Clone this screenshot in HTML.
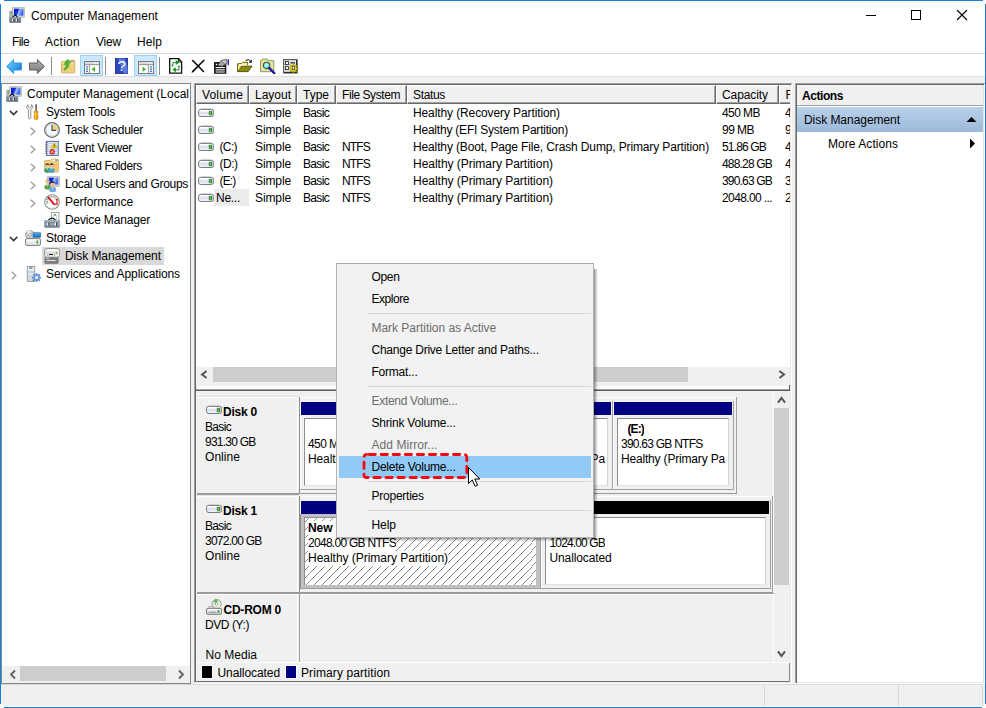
<!DOCTYPE html>
<html><head><meta charset="utf-8"><title>Computer Management</title>
<style>
html,body{margin:0;padding:0;background:#fff;}
body{width:986px;height:708px;overflow:hidden;position:relative;font-family:"Liberation Sans",sans-serif;font-size:12px;color:#000;}
#win{position:absolute;left:0;top:0;width:986px;height:708px;overflow:hidden;background:#fff;}
#win div,#win span,#win svg{position:absolute;}
.t{white-space:nowrap;line-height:16px;height:16px;}

</style></head>
<body>
<div id="win">
<div style="left:0px;top:0px;width:986px;height:708px;background:#fff;"></div>
<div style="left:1px;top:77px;width:984px;height:630px;background:#f0f0f0;"></div>
<div style="left:1px;top:76px;width:984px;height:1px;background:#dfdfdf;"></div>
<div style="left:1px;top:53px;width:984px;height:1px;background:#d4d4d4;"></div>
<div style="left:4px;top:0px;width:979px;height:1px;background:#1880d8;"></div>
<div style="left:0px;top:4px;width:1px;height:700px;background:#1880d8;"></div>
<div style="left:985px;top:4px;width:1px;height:700px;background:#1880d8;"></div>
<div style="left:4px;top:707px;width:978px;height:1px;background:#1880d8;"></div>
<div style="left:0px;top:704px;width:1px;height:4px;background:#fff;"></div>
<div style="left:1px;top:706px;width:984px;height:1px;background:#fbfbfb;"></div>
<div style="left:1px;top:684px;width:984px;height:1px;background:#d9d9d9;"></div>
<span class="t" style="left:31px;top:8px;letter-spacing:0.049px;">Computer Management</span>
<svg style="left:860px;top:5px" width="120" height="22" viewBox="0 0 120 22"><path d="M6 10.5H16" stroke="#000" stroke-width="1" fill="none"/><rect x="51.5" y="5.5" width="9" height="9" stroke="#000" stroke-width="1" fill="none"/><path d="M97 5L107 15M107 5L97 15" stroke="#000" stroke-width="1.1" fill="none"/></svg>
<span class="t" style="left:12px;top:34px;letter-spacing:-0.586px;">File</span>
<span class="t" style="left:45px;top:34px;letter-spacing:0.273px;">Action</span>
<span class="t" style="left:96px;top:34px;letter-spacing:-0.199px;">View</span>
<span class="t" style="left:137px;top:34px;letter-spacing:0.078px;">Help</span>
<div style="left:1px;top:83px;width:190px;height:601px;background:#fff;border:1px solid #828790;box-sizing:border-box;"></div>
<div style="left:2px;top:666px;width:188px;height:17px;background:#f0f0f0;"></div>
<div style="left:20px;top:666px;width:146px;height:15px;background:#cdcdcd;"></div>
<svg style="left:3px;top:666px" width="186" height="16"><path d="M12 4.5L8 8.5L12 12.5" stroke="#606060" stroke-width="1.8" fill="none"/><path d="M176 4.5L180 8.5L176 12.5" stroke="#606060" stroke-width="1.8" fill="none"/></svg>
<span class="t" style="left:27px;top:86px;letter-spacing:-0.004px;max-width:163px;overflow:hidden;">Computer Management (Local</span>
<svg style="left:6px;top:86px" width="16" height="16" viewBox="0 0 16 16"><defs><linearGradient id="g1" x1="0" y1="0" x2="1" y2="0.3"><stop offset="0" stop-color="#0818c8"/><stop offset=".45" stop-color="#1030e0"/><stop offset=".6" stop-color="#a8c0ff"/><stop offset="1" stop-color="#3860f0"/></linearGradient></defs><rect x="0.8" y="4" width="2.6" height="6.5" fill="#b8b8b8" stroke="#909090" stroke-width=".5"/><rect x="1.5" y="7.2" width="1.4" height="1.1" fill="#30e030"/><rect x="1.9" y="5" width=".6" height="1.4" fill="#404040"/><rect x="3.5" y="0.3" width="12.2" height="9.9" rx=".6" fill="#dcdcd8" stroke="#a8a8a8" stroke-width=".7"/><rect x="5" y="1.7" width="9.4" height="7" fill="url(#g1)"/><path d="M3.5 10.8Q6.1 5.8 8.7 10.8" stroke="#101010" stroke-width="1.3" fill="#f4f4f4"/><rect x="0.3" y="10.3" width="11.8" height="5.4" rx=".5" fill="#5f6f7d"/><rect x="0.3" y="10.3" width="11.8" height="1.6" fill="#93a1ae"/><rect x="0.3" y="12.6" width="11.8" height="1.3" fill="#8795a2"/><rect x="3.2" y="12.2" width="1.2" height="2.2" fill="#fff"/><rect x="4.4" y="12.2" width=".9" height="2.2" fill="#222"/><rect x="6.9" y="12.2" width="1.2" height="2.2" fill="#fff"/><rect x="8.1" y="12.2" width=".9" height="2.2" fill="#222"/></svg>
<span class="t" style="left:46px;top:104px;letter-spacing:-0.178px;">System Tools</span>
<svg style="left:25px;top:104px" width="16" height="16" viewBox="0 0 16 16"><path d="M3.2 0.6C1.6 1.3 1.2 3 2 4.4L3.4 5.6V14.2Q4.6 15.6 5.8 14.2V5.6L7.4 4.2C8 3 7.8 1.4 6.6 0.5L6.4 3L4.8 3.9L3.3 3Z" fill="#f2f2f2" stroke="#808080" stroke-width=".8" stroke-linejoin="round"/><rect x="10.5" y="0.2" width="1.2" height="7.4" fill="#303030"/><path d="M9.2 7.2H13V9.6L12.2 10.4L13 11.2V15Q11.1 16.2 9.2 15V11.2L10 10.4L9.2 9.6Z" fill="#f0a010" stroke="#c07800" stroke-width=".5"/><rect x="10" y="7.8" width="1" height="7" fill="#ffd060" opacity=".8"/></svg>
<svg style="left:9px;top:104px" width="10" height="16"><path d="M0.9 6.8L4.6 10.5L8.3 6.8" stroke="#3c3c3c" stroke-width="1.7" fill="none"/></svg>
<span class="t" style="left:65px;top:122px;letter-spacing:-0.289px;">Task Scheduler</span>
<svg style="left:44px;top:122px" width="16" height="16" viewBox="0 0 16 16"><circle cx="8" cy="8" r="7.3" fill="#e4e8ec" stroke="#6a6a6a" stroke-width="1.3"/><circle cx="8" cy="8" r="6.1" fill="#f4f8fc" stroke="#c4ccd4" stroke-width=".8"/><path d="M8 8V2.2A5.8 5.8 0 0 1 13.8 8Z" fill="#f6cf72"/><path d="M8 3V8.4H12.2" stroke="#304878" stroke-width="1.1" fill="none"/></svg>
<svg style="left:28px;top:122px" width="10" height="16"><path d="M2.8 5.7L6.7 9.5L2.8 13.3" stroke="#a6a6a6" stroke-width="1.6" fill="none"/></svg>
<span class="t" style="left:65px;top:140px;letter-spacing:-0.290px;">Event Viewer</span>
<svg style="left:44px;top:140px" width="16" height="16" viewBox="0 0 16 16"><rect x="2.6" y="1.4" width="11.6" height="14" fill="#e8eefa" stroke="#4a68a8" stroke-width="1"/><g stroke="#a8bce0" stroke-width=".6"><path d="M4 3.5H13.5M4 5.5H13.5M4 7.5H13.5M4 9.5H13.5M4 11.5H13.5M4 13.5H13.5"/></g><g stroke="#707070" stroke-width=".9"><path d="M1.2 2.6H3.6M1.2 4.4H3.6M1.2 6.2H3.6M1.2 8H3.6M1.2 9.8H3.6M1.2 11.6H3.6M1.2 13.4H3.6"/></g><path d="M10.2 2.6L13.3 8H7.1Z" fill="#f8d800" stroke="#c8a000" stroke-width=".5"/><rect x="9.8" y="4.4" width=".9" height="2" fill="#202020"/><rect x="9.8" y="6.8" width=".9" height=".7" fill="#202020"/><circle cx="8.3" cy="11.8" r="2.5" fill="#e02020" stroke="#a01010" stroke-width=".4"/><path d="M7.2 10.7L9.4 12.9M9.4 10.7L7.2 12.9" stroke="#fff" stroke-width=".9"/></svg>
<svg style="left:28px;top:140px" width="10" height="16"><path d="M2.8 5.7L6.7 9.5L2.8 13.3" stroke="#a6a6a6" stroke-width="1.6" fill="none"/></svg>
<span class="t" style="left:65px;top:158px;letter-spacing:-0.360px;">Shared Folders</span>
<svg style="left:44px;top:158px" width="16" height="16" viewBox="0 0 16 16"><path d="M0.6 3.8Q0.6 2.4 2 2.4H6.6L8 1H13.4Q14.4 1 14.4 2V13.4Q14.4 14 13.6 14H0.6Z" fill="#f3d487" stroke="#d2a24a" stroke-width=".8"/><rect x="8.6" y="1.6" width="4.4" height="1.2" fill="#fff"/><rect x="11.2" y="1.6" width="1.8" height="1.2" fill="#3a78d0"/><rect x="9.5" y="4" width="4.6" height="9.6" fill="#eec874"/><ellipse cx="3.4" cy="12.54" rx="3.04" ry="2.4699999999999998" fill="#3aa07a"/><circle cx="3.4" cy="7.6" r="1.9949999999999999" fill="#f0c090"/><path d="M1.31 7.409999999999999A2.09 2.09 0 0 1 5.49 7.409999999999999L4.54 6.6499999999999995L2.26 6.6499999999999995Z" fill="#403028"/><path d="M2.735 10.355L3.4 11.969999999999999L4.0649999999999995 10.355Z" fill="#fff"/><ellipse cx="7.6" cy="12.54" rx="3.04" ry="2.4699999999999998" fill="#48a0c8"/><circle cx="7.6" cy="7.6" r="1.9949999999999999" fill="#f0c090"/><path d="M5.51 7.409999999999999A2.09 2.09 0 0 1 9.69 7.409999999999999L8.74 6.6499999999999995L6.46 6.6499999999999995Z" fill="#302820"/><path d="M6.935 10.355L7.6 11.969999999999999L8.264999999999999 10.355Z" fill="#fff"/></svg>
<svg style="left:28px;top:158px" width="10" height="16"><path d="M2.8 5.7L6.7 9.5L2.8 13.3" stroke="#a6a6a6" stroke-width="1.6" fill="none"/></svg>
<span class="t" style="left:65px;top:176px;letter-spacing:-0.291px;">Local Users and Groups</span>
<svg style="left:44px;top:176px" width="16" height="16" viewBox="0 0 16 16"><defs><linearGradient id="g2" x1="0" y1="0" x2="1" y2="0.3"><stop offset="0" stop-color="#0818c8"/><stop offset=".45" stop-color="#1030e0"/><stop offset=".6" stop-color="#a8c0ff"/><stop offset="1" stop-color="#3860f0"/></linearGradient></defs><rect x="3.4" y="0.4" width="12.2" height="10" rx=".5" fill="#dcdcd8" stroke="#a8a8a8" stroke-width=".7"/><rect x="4.8" y="1.6" width="9.4" height="7" fill="url(#g2)"/><ellipse cx="3.6" cy="11.0" rx="3.2" ry="2.6" fill="#58a838"/><circle cx="3.6" cy="5.8" r="2.1" fill="#f0c090"/><path d="M1.4 5.6A2.2 2.2 0 0 1 5.800000000000001 5.6L4.8 4.8L2.4000000000000004 4.8Z" fill="#c8a860"/><path d="M2.9000000000000004 8.7L3.6 10.399999999999999L4.3 8.7Z" fill="#fff"/><ellipse cx="8.6" cy="13.72" rx="3.5200000000000005" ry="2.8600000000000003" fill="#78a8e0"/><circle cx="8.6" cy="8.0" r="2.3100000000000005" fill="#f0c090"/><path d="M6.18 7.78A2.4200000000000004 2.4200000000000004 0 0 1 11.02 7.78L9.92 6.9L7.279999999999999 6.9Z" fill="#403020"/><path d="M7.83 11.19L8.6 13.059999999999999L9.37 11.19Z" fill="#fff"/></svg>
<svg style="left:28px;top:176px" width="10" height="16"><path d="M2.8 5.7L6.7 9.5L2.8 13.3" stroke="#a6a6a6" stroke-width="1.6" fill="none"/></svg>
<span class="t" style="left:65px;top:194px;letter-spacing:-0.064px;">Performance</span>
<svg style="left:44px;top:194px" width="16" height="16" viewBox="0 0 16 16"><circle cx="8" cy="8" r="7.3" fill="#fff" stroke="#8c8c8c" stroke-width="1.1"/><circle cx="8" cy="8" r="6.2" fill="none" stroke="#d8d8d8" stroke-width=".6"/><path d="M3.6 9.5A4.8 4.8 0 0 1 11.8 4.6" stroke="#3a8050" stroke-width="1.4" fill="none" stroke-dasharray="0.8 0.9"/><path d="M11.6 5.4H13V10.2H10.8" stroke="#e01818" stroke-width="1.2" fill="none"/><path d="M4.3 3.4L10.2 10.3" stroke="#e01818" stroke-width="1.9" stroke-linecap="round"/></svg>
<svg style="left:28px;top:194px" width="10" height="16"><path d="M2.8 5.7L6.7 9.5L2.8 13.3" stroke="#a6a6a6" stroke-width="1.6" fill="none"/></svg>
<span class="t" style="left:65px;top:212px;letter-spacing:-0.170px;">Device Manager</span>
<svg style="left:44px;top:212px" width="16" height="16" viewBox="0 0 16 16"><rect x="7.3" y="0.4" width="7.6" height="8.4" fill="#fff" stroke="#909090" stroke-width=".8"/><rect x="9.6" y="3.2" width="3" height="5.4" fill="#fff" stroke="#b0b0b0" stroke-width=".6"/><circle cx="11" cy="2.7" r="1" fill="#30c030"/><path d="M4 8.6Q8 3.6 12 8.6" stroke="#101010" stroke-width="1.2" fill="none"/><rect x="0.3" y="8.2" width="15.4" height="7.5" rx=".6" fill="#74828f"/><rect x="0.3" y="8.2" width="15.4" height="2" fill="#a6b2be"/><rect x="0.3" y="11.2" width="15.4" height="2.2" fill="#98a5b2"/><rect x="3.2" y="10.6" width="1.2" height="3" fill="#fff"/><rect x="4.4" y="10.6" width=".9" height="3" fill="#333"/><rect x="10.8" y="10.6" width="1.2" height="3" fill="#fff"/><rect x="12" y="10.6" width=".9" height="3" fill="#333"/></svg>
<span class="t" style="left:46px;top:230px;letter-spacing:-0.290px;">Storage</span>
<svg style="left:25px;top:230px" width="16" height="16" viewBox="0 0 16 16"><defs><linearGradient id="g3" x1="0" y1="0" x2="0" y2="1"><stop offset="0" stop-color="#58b0e8"/><stop offset="1" stop-color="#1868b0"/></linearGradient></defs><circle cx="4.8" cy="4.8" r="4.5" fill="#c8c8c8" stroke="#909090" stroke-width=".6"/><path d="M4.8 4.8L1 2.4A4.5 4.5 0 0 1 5.6 0.4Z" fill="#f0f0f0"/><rect x="1.2" y="2.2" width="1" height="1" fill="#50c040"/><circle cx="4.8" cy="4.8" r="1.3" fill="#fff" stroke="#707070" stroke-width=".5"/><rect x="8" y="2.4" width="7.8" height="5" rx=".8" fill="url(#g3)" stroke="#1860a0" stroke-width=".5"/><rect x="0.5" y="8.6" width="15" height="6.8" rx="1.6" fill="#e4e6ec" stroke="#707070" stroke-width=".9"/><rect x="1.4" y="9.4" width="13.2" height="2" rx="1" fill="#fafafa"/><rect x="11.6" y="10.4" width="1.6" height="3.2" fill="#38b030"/></svg>
<svg style="left:9px;top:230px" width="10" height="16"><path d="M0.9 6.8L4.6 10.5L8.3 6.8" stroke="#3c3c3c" stroke-width="1.7" fill="none"/></svg>
<div style="left:42px;top:247px;width:122px;height:18px;background:#d9d9d9;"></div>
<span class="t" style="left:65px;top:248px;letter-spacing:-0.048px;">Disk Management</span>
<svg style="left:44px;top:248px" width="16" height="16" viewBox="0 0 16 16"><rect x="0.8" y="9" width="13.4" height="6.6" rx=".8" fill="#7c7c7c" stroke="#606060" stroke-width=".5"/><rect x="2.6" y="12" width="9" height=".9" fill="#f0f0f0"/><rect x="1.6" y="9.6" width="3.4" height="1" fill="#e8e8e8"/><rect x="0.7" y="0.6" width="15" height="8.6" rx="2" fill="#f4f4f4" stroke="#808080" stroke-width=".9"/><rect x="3.6" y="1.4" width="7.6" height="1.6" fill="#fff"/><rect x="1.6" y="3.4" width="12.8" height="3" fill="#dcdcdc"/><rect x="5.2" y="6" width="3.8" height="1.1" fill="#101010"/><rect x="3.4" y="6.6" width=".9" height=".9" fill="#2040c0"/><rect x="10" y="6.6" width=".9" height=".9" fill="#2040c0"/><rect x="11.8" y="4" width="1.4" height="2.2" fill="#78b820"/></svg>
<span class="t" style="left:46px;top:266px;letter-spacing:-0.110px;">Services and Applications</span>
<svg style="left:25px;top:266px" width="16" height="16" viewBox="0 0 16 16"><rect x="2.2" y="0.4" width="7.6" height="15.2" fill="#d4d8dc" stroke="#888" stroke-width=".7"/><rect x="3" y="1.2" width="6" height="3.2" fill="#f8f8f8"/><rect x="4" y="1.6" width="3.6" height=".9" fill="#203060"/><rect x="3" y="5" width="6" height="1.6" fill="#b8d8e8"/><rect x="3" y="7.4" width="6" height="1.2" fill="#f4f4f4"/><rect x="7.4" y="13.6" width="1.4" height="1.2" fill="#40b030"/><g transform="translate(11.6 11.6)"><g fill="#5888d0"><rect x="-0.8" y="-4.6" width="1.6" height="2.2" transform="rotate(0)"/><rect x="-0.8" y="-4.6" width="1.6" height="2.2" transform="rotate(45)"/><rect x="-0.8" y="-4.6" width="1.6" height="2.2" transform="rotate(90)"/><rect x="-0.8" y="-4.6" width="1.6" height="2.2" transform="rotate(135)"/><rect x="-0.8" y="-4.6" width="1.6" height="2.2" transform="rotate(180)"/><rect x="-0.8" y="-4.6" width="1.6" height="2.2" transform="rotate(225)"/><rect x="-0.8" y="-4.6" width="1.6" height="2.2" transform="rotate(270)"/><rect x="-0.8" y="-4.6" width="1.6" height="2.2" transform="rotate(315)"/></g><circle r="3.3" fill="#6c98dc"/><circle r="1.5" fill="#fff"/></g></svg>
<svg style="left:9px;top:266px" width="10" height="16"><path d="M2.8 5.7L6.7 9.5L2.8 13.3" stroke="#a6a6a6" stroke-width="1.6" fill="none"/></svg>
<div style="left:194px;top:83px;width:598px;height:601px;background:#fff;"></div>
<div style="left:194px;top:83px;width:598px;height:1px;background:#a0a0a0;"></div>
<div style="left:194px;top:83px;width:1px;height:600px;background:#a0a0a0;"></div>
<div style="left:195px;top:84px;width:596px;height:1px;background:#696969;"></div>
<div style="left:195px;top:84px;width:1px;height:598px;background:#696969;"></div>
<div style="left:790px;top:85px;width:1px;height:598px;background:#e9e9e9;"></div>
<div style="left:196px;top:682px;width:595px;height:1px;background:#eeeeee;"></div>
<div style="left:196px;top:85px;width:594px;height:19px;background:#f0f0f0;"></div>
<div style="left:196px;top:85px;width:53px;height:19px;background:#f0f0f0;box-sizing:border-box;border-left:1px solid #fff;border-top:1px solid #fff;border-right:1px solid #696969;border-bottom:1px solid #696969;"></div>
<div style="left:247px;top:86px;width:1px;height:17px;background:#a0a0a0;"></div>
<div style="left:197px;top:102px;width:51px;height:1px;background:#a0a0a0;"></div>
<span class="t" style="left:202px;top:87px;letter-spacing:0.161px;">Volume</span>
<div style="left:249px;top:85px;width:48px;height:19px;background:#f0f0f0;box-sizing:border-box;border-left:1px solid #fff;border-top:1px solid #fff;border-right:1px solid #696969;border-bottom:1px solid #696969;"></div>
<div style="left:295px;top:86px;width:1px;height:17px;background:#a0a0a0;"></div>
<div style="left:250px;top:102px;width:46px;height:1px;background:#a0a0a0;"></div>
<span class="t" style="left:255px;top:87px;letter-spacing:-0.005px;">Layout</span>
<div style="left:297px;top:85px;width:39px;height:19px;background:#f0f0f0;box-sizing:border-box;border-left:1px solid #fff;border-top:1px solid #fff;border-right:1px solid #696969;border-bottom:1px solid #696969;"></div>
<div style="left:334px;top:86px;width:1px;height:17px;background:#a0a0a0;"></div>
<div style="left:298px;top:102px;width:37px;height:1px;background:#a0a0a0;"></div>
<span class="t" style="left:303px;top:87px;letter-spacing:-0.004px;">Type</span>
<div style="left:336px;top:85px;width:71px;height:19px;background:#f0f0f0;box-sizing:border-box;border-left:1px solid #fff;border-top:1px solid #fff;border-right:1px solid #696969;border-bottom:1px solid #696969;"></div>
<div style="left:405px;top:86px;width:1px;height:17px;background:#a0a0a0;"></div>
<div style="left:337px;top:102px;width:69px;height:1px;background:#a0a0a0;"></div>
<span class="t" style="left:342px;top:87px;letter-spacing:-0.426px;">File System</span>
<div style="left:407px;top:85px;width:309px;height:19px;background:#f0f0f0;box-sizing:border-box;border-left:1px solid #fff;border-top:1px solid #fff;border-right:1px solid #696969;border-bottom:1px solid #696969;"></div>
<div style="left:714px;top:86px;width:1px;height:17px;background:#a0a0a0;"></div>
<div style="left:408px;top:102px;width:307px;height:1px;background:#a0a0a0;"></div>
<span class="t" style="left:413px;top:87px;letter-spacing:-0.339px;">Status</span>
<div style="left:716px;top:85px;width:63px;height:19px;background:#f0f0f0;box-sizing:border-box;border-left:1px solid #fff;border-top:1px solid #fff;border-right:1px solid #696969;border-bottom:1px solid #696969;"></div>
<div style="left:777px;top:86px;width:1px;height:17px;background:#a0a0a0;"></div>
<div style="left:717px;top:102px;width:61px;height:1px;background:#a0a0a0;"></div>
<span class="t" style="left:722px;top:87px;letter-spacing:-0.086px;">Capacity</span>
<div style="left:779px;top:85px;width:11px;height:19px;background:#f0f0f0;box-sizing:border-box;border-left:1px solid #fff;border-top:1px solid #fff;border-bottom:1px solid #696969;"></div>
<div style="left:780px;top:102px;width:10px;height:1px;background:#a0a0a0;"></div>
<span class="t" style="left:785.5px;top:87px;letter-spacing:-1.344px;max-width:4.5px;overflow:hidden;">F</span>
<svg style="left:198px;top:108px" width="16" height="10" viewBox="0 0 16 10"><path d="M2 1.9L3.8 0.3H12.4L14.2 1.9Z" fill="#ececec" stroke="#c8c8cc" stroke-width=".6"/><rect x="0.5" y="1.4" width="15.2" height="7.1" rx="2.2" fill="#dfe2ee" stroke="#6e6e78" stroke-width=".9"/><rect x="1.6" y="2.1" width="9" height="1.5" rx=".7" fill="#fff"/><rect x="1.8" y="6.6" width="11.6" height="1.1" rx=".5" fill="#f4f4f8"/><rect x="10.8" y="3.1" width="3.4" height="4.1" rx=".8" fill="#514a60"/><rect x="11.5" y="3.3" width="1.8" height="3.7" fill="#36e41c"/></svg>
<span class="t" style="left:255px;top:105px;letter-spacing:-0.115px;">Simple</span>
<span class="t" style="left:303px;top:105px;letter-spacing:-0.669px;">Basic</span>
<span class="t" style="left:413px;top:105px;letter-spacing:-0.109px;">Healthy (Recovery Partition)</span>
<span class="t" style="left:722px;top:105px;letter-spacing:-0.560px;">450 MB</span>
<span class="t" style="left:785px;top:105px;max-width:5px;overflow:hidden;">4</span>
<svg style="left:198px;top:125px" width="16" height="10" viewBox="0 0 16 10"><path d="M2 1.9L3.8 0.3H12.4L14.2 1.9Z" fill="#ececec" stroke="#c8c8cc" stroke-width=".6"/><rect x="0.5" y="1.4" width="15.2" height="7.1" rx="2.2" fill="#dfe2ee" stroke="#6e6e78" stroke-width=".9"/><rect x="1.6" y="2.1" width="9" height="1.5" rx=".7" fill="#fff"/><rect x="1.8" y="6.6" width="11.6" height="1.1" rx=".5" fill="#f4f4f8"/><rect x="10.8" y="3.1" width="3.4" height="4.1" rx=".8" fill="#514a60"/><rect x="11.5" y="3.3" width="1.8" height="3.7" fill="#36e41c"/></svg>
<span class="t" style="left:255px;top:122px;letter-spacing:-0.115px;">Simple</span>
<span class="t" style="left:303px;top:122px;letter-spacing:-0.669px;">Basic</span>
<span class="t" style="left:413px;top:122px;letter-spacing:-0.213px;">Healthy (EFI System Partition)</span>
<span class="t" style="left:722px;top:122px;letter-spacing:-0.537px;">99 MB</span>
<span class="t" style="left:785px;top:122px;max-width:5px;overflow:hidden;">9</span>
<span class="t" style="left:219.5px;top:139px;letter-spacing:-0.625px;">(C:)</span>
<svg style="left:198px;top:142px" width="16" height="10" viewBox="0 0 16 10"><path d="M2 1.9L3.8 0.3H12.4L14.2 1.9Z" fill="#ececec" stroke="#c8c8cc" stroke-width=".6"/><rect x="0.5" y="1.4" width="15.2" height="7.1" rx="2.2" fill="#dfe2ee" stroke="#6e6e78" stroke-width=".9"/><rect x="1.6" y="2.1" width="9" height="1.5" rx=".7" fill="#fff"/><rect x="1.8" y="6.6" width="11.6" height="1.1" rx=".5" fill="#f4f4f8"/><rect x="10.8" y="3.1" width="3.4" height="4.1" rx=".8" fill="#514a60"/><rect x="11.5" y="3.3" width="1.8" height="3.7" fill="#36e41c"/></svg>
<span class="t" style="left:255px;top:139px;letter-spacing:-0.115px;">Simple</span>
<span class="t" style="left:303px;top:139px;letter-spacing:-0.669px;">Basic</span>
<span class="t" style="left:342px;top:139px;letter-spacing:-0.836px;">NTFS</span>
<span class="t" style="left:413px;top:139px;letter-spacing:-0.133px;">Healthy (Boot, Page File, Crash Dump, Primary Partition)</span>
<span class="t" style="left:722px;top:139px;letter-spacing:-0.838px;">51.86 GB</span>
<span class="t" style="left:785px;top:139px;max-width:5px;overflow:hidden;">4</span>
<span class="t" style="left:219.5px;top:156px;letter-spacing:-0.500px;">(D:)</span>
<svg style="left:198px;top:159px" width="16" height="10" viewBox="0 0 16 10"><path d="M2 1.9L3.8 0.3H12.4L14.2 1.9Z" fill="#ececec" stroke="#c8c8cc" stroke-width=".6"/><rect x="0.5" y="1.4" width="15.2" height="7.1" rx="2.2" fill="#dfe2ee" stroke="#6e6e78" stroke-width=".9"/><rect x="1.6" y="2.1" width="9" height="1.5" rx=".7" fill="#fff"/><rect x="1.8" y="6.6" width="11.6" height="1.1" rx=".5" fill="#f4f4f8"/><rect x="10.8" y="3.1" width="3.4" height="4.1" rx=".8" fill="#514a60"/><rect x="11.5" y="3.3" width="1.8" height="3.7" fill="#36e41c"/></svg>
<span class="t" style="left:255px;top:156px;letter-spacing:-0.115px;">Simple</span>
<span class="t" style="left:303px;top:156px;letter-spacing:-0.669px;">Basic</span>
<span class="t" style="left:342px;top:156px;letter-spacing:-0.836px;">NTFS</span>
<span class="t" style="left:413px;top:156px;letter-spacing:-0.026px;">Healthy (Primary Partition)</span>
<span class="t" style="left:722px;top:156px;letter-spacing:-0.819px;">488.28 GB</span>
<span class="t" style="left:785px;top:156px;max-width:5px;overflow:hidden;">4</span>
<span class="t" style="left:219.5px;top:173px;letter-spacing:-0.836px;">(E:)</span>
<svg style="left:198px;top:176px" width="16" height="10" viewBox="0 0 16 10"><path d="M2 1.9L3.8 0.3H12.4L14.2 1.9Z" fill="#ececec" stroke="#c8c8cc" stroke-width=".6"/><rect x="0.5" y="1.4" width="15.2" height="7.1" rx="2.2" fill="#dfe2ee" stroke="#6e6e78" stroke-width=".9"/><rect x="1.6" y="2.1" width="9" height="1.5" rx=".7" fill="#fff"/><rect x="1.8" y="6.6" width="11.6" height="1.1" rx=".5" fill="#f4f4f8"/><rect x="10.8" y="3.1" width="3.4" height="4.1" rx=".8" fill="#514a60"/><rect x="11.5" y="3.3" width="1.8" height="3.7" fill="#36e41c"/></svg>
<span class="t" style="left:255px;top:173px;letter-spacing:-0.115px;">Simple</span>
<span class="t" style="left:303px;top:173px;letter-spacing:-0.669px;">Basic</span>
<span class="t" style="left:342px;top:173px;letter-spacing:-0.836px;">NTFS</span>
<span class="t" style="left:413px;top:173px;letter-spacing:-0.026px;">Healthy (Primary Partition)</span>
<span class="t" style="left:722px;top:173px;letter-spacing:-0.819px;">390.63 GB</span>
<span class="t" style="left:785px;top:173px;max-width:5px;overflow:hidden;">3</span>
<div style="left:214px;top:189px;width:35px;height:17px;background:#ececec;"></div>
<span class="t" style="left:216px;top:190px;letter-spacing:-0.269px;">Ne...</span>
<svg style="left:198px;top:193px" width="16" height="10" viewBox="0 0 16 10"><path d="M2 1.9L3.8 0.3H12.4L14.2 1.9Z" fill="#ececec" stroke="#c8c8cc" stroke-width=".6"/><rect x="0.5" y="1.4" width="15.2" height="7.1" rx="2.2" fill="#dfe2ee" stroke="#6e6e78" stroke-width=".9"/><rect x="1.6" y="2.1" width="9" height="1.5" rx=".7" fill="#fff"/><rect x="1.8" y="6.6" width="11.6" height="1.1" rx=".5" fill="#f4f4f8"/><rect x="10.8" y="3.1" width="3.4" height="4.1" rx=".8" fill="#514a60"/><rect x="11.5" y="3.3" width="1.8" height="3.7" fill="#36e41c"/></svg>
<span class="t" style="left:255px;top:190px;letter-spacing:-0.115px;">Simple</span>
<span class="t" style="left:303px;top:190px;letter-spacing:-0.669px;">Basic</span>
<span class="t" style="left:342px;top:190px;letter-spacing:-0.836px;">NTFS</span>
<span class="t" style="left:413px;top:190px;letter-spacing:-0.026px;">Healthy (Primary Partition)</span>
<span class="t" style="left:722px;top:190px;letter-spacing:-0.611px;">2048.00 ...</span>
<span class="t" style="left:785px;top:190px;max-width:5px;overflow:hidden;">2</span>
<div style="left:196px;top:367px;width:594px;height:19px;background:#f0f0f0;"></div>
<div style="left:213px;top:367px;width:475px;height:15px;background:#cdcdcd;"></div>
<svg style="left:196px;top:367px" width="594" height="15"><path d="M10.6 4L6 7.5L10.6 11" stroke="#555" stroke-width="2" fill="none"/><path d="M583.4 4L588 7.5L583.4 11" stroke="#555" stroke-width="2" fill="none"/></svg>
<div style="left:196px;top:386px;width:594px;height:3px;background:#fbfbfb;"></div>
<div style="left:196px;top:389px;width:594px;height:1px;background:#a0a0a0;"></div>
<div style="left:196px;top:390px;width:594px;height:1px;background:#5c5c5c;"></div>
<div style="left:789px;top:385px;width:1px;height:6px;background:#5c5c5c;"></div>
<div style="left:196px;top:386px;width:1px;height:3px;background:#d8d8d8;"></div>
<div style="left:196px;top:391px;width:578px;height:271px;background:#f0f0f0;"></div>
<div style="left:773px;top:391px;width:17px;height:271px;background:#f0f0f0;"></div>
<div style="left:773px;top:391px;width:1px;height:271px;background:#fafafa;"></div>
<div style="left:774px;top:408px;width:15px;height:177px;background:#cdcdcd;"></div>
<svg style="left:773px;top:391px" width="17" height="271"><path d="M5 11.6L8.5 7L12 11.6" stroke="#555" stroke-width="2" fill="none"/><path d="M5 260.4L8.5 265L12 260.4" stroke="#555" stroke-width="2" fill="none"/></svg>
<div style="left:197px;top:397px;width:539px;height:1px;background:#fff;"></div>
<div style="left:197px;top:396px;width:102px;height:1px;background:#e3e3e3;"></div>
<div style="left:297px;top:397px;width:1px;height:97px;background:#fff;"></div>
<div style="left:299px;top:397px;width:1px;height:97px;background:#8c8c8c;"></div>
<div style="left:197px;top:493px;width:540px;height:1px;background:#989898;"></div>
<div style="left:197px;top:494px;width:102px;height:1px;background:#a0a0a0;"></div>
<div style="left:736px;top:397px;width:1px;height:97px;background:#a0a0a0;"></div>
<span class="t" style="left:223px;top:404px;font-weight:bold;letter-spacing:-0.227px;">Disk 0</span>
<span class="t" style="left:205px;top:419px;letter-spacing:-0.669px;">Basic</span>
<span class="t" style="left:205px;top:434px;letter-spacing:-0.764px;">931.30 GB</span>
<span class="t" style="left:205px;top:449px;letter-spacing:0.052px;">Online</span>
<svg style="left:206px;top:405px" width="16" height="10" viewBox="0 0 16 10"><path d="M2 1.9L3.8 0.3H12.4L14.2 1.9Z" fill="#ececec" stroke="#c8c8cc" stroke-width=".6"/><rect x="0.5" y="1.4" width="15.2" height="7.1" rx="2.2" fill="#dfe2ee" stroke="#6e6e78" stroke-width=".9"/><rect x="1.6" y="2.1" width="9" height="1.5" rx=".7" fill="#fff"/><rect x="1.8" y="6.6" width="11.6" height="1.1" rx=".5" fill="#f4f4f8"/><rect x="10.8" y="3.1" width="3.4" height="4.1" rx=".8" fill="#514a60"/><rect x="11.5" y="3.3" width="1.8" height="3.7" fill="#36e41c"/></svg>
<div style="left:300px;top:415px;width:51px;height:75px;background:#f0f0f0;"></div>
<div style="left:300px;top:401px;width:1px;height:89px;background:#fff;"></div>
<div style="left:350px;top:401px;width:1px;height:89px;background:#a0a0a0;"></div>
<div style="left:300px;top:489px;width:51px;height:1px;background:#a0a0a0;"></div>
<div style="left:301px;top:402px;width:48px;height:13px;background:#000080;"></div>
<div style="left:304px;top:418px;width:42px;height:68px;background:#fff;box-sizing:border-box;border-top:1px solid #8c8c8c;border-left:1px solid #8c8c8c;border-right:1px solid #d4d4d4;border-bottom:1px solid #e4e4e4;"></div>
<span class="t" style="left:308px;top:436px;letter-spacing:-0.560px;max-width:37px;overflow:hidden;">450 MB</span>
<span class="t" style="left:308px;top:451px;letter-spacing:-0.109px;max-width:37px;overflow:hidden;">Healthy (Recovery Partition)</span>
<div style="left:351px;top:415px;width:50px;height:75px;background:#f0f0f0;"></div>
<div style="left:351px;top:401px;width:1px;height:89px;background:#fff;"></div>
<div style="left:400px;top:401px;width:1px;height:89px;background:#a0a0a0;"></div>
<div style="left:351px;top:489px;width:50px;height:1px;background:#a0a0a0;"></div>
<div style="left:352px;top:402px;width:47px;height:13px;background:#000080;"></div>
<div style="left:355px;top:418px;width:41px;height:68px;background:#fff;box-sizing:border-box;border-top:1px solid #8c8c8c;border-left:1px solid #8c8c8c;border-right:1px solid #d4d4d4;border-bottom:1px solid #e4e4e4;"></div>
<div style="left:401px;top:415px;width:100px;height:75px;background:#f0f0f0;"></div>
<div style="left:401px;top:401px;width:1px;height:89px;background:#fff;"></div>
<div style="left:500px;top:401px;width:1px;height:89px;background:#a0a0a0;"></div>
<div style="left:401px;top:489px;width:100px;height:1px;background:#a0a0a0;"></div>
<div style="left:402px;top:402px;width:97px;height:13px;background:#000080;"></div>
<div style="left:405px;top:418px;width:91px;height:68px;background:#fff;box-sizing:border-box;border-top:1px solid #8c8c8c;border-left:1px solid #8c8c8c;border-right:1px solid #d4d4d4;border-bottom:1px solid #e4e4e4;"></div>
<div style="left:501px;top:415px;width:112px;height:75px;background:#f0f0f0;"></div>
<div style="left:501px;top:401px;width:1px;height:89px;background:#fff;"></div>
<div style="left:612px;top:401px;width:1px;height:89px;background:#a0a0a0;"></div>
<div style="left:501px;top:489px;width:112px;height:1px;background:#a0a0a0;"></div>
<div style="left:502px;top:402px;width:109px;height:13px;background:#000080;"></div>
<div style="left:505px;top:418px;width:103px;height:68px;background:#fff;box-sizing:border-box;border-top:1px solid #8c8c8c;border-left:1px solid #8c8c8c;border-right:1px solid #d4d4d4;border-bottom:1px solid #e4e4e4;"></div>
<span class="t" style="left:499px;top:451px;letter-spacing:-0.072px;max-width:108px;overflow:hidden;">Healthy (Primary Pa</span>
<div style="left:613px;top:415px;width:121px;height:75px;background:#f0f0f0;"></div>
<div style="left:613px;top:401px;width:1px;height:89px;background:#fff;"></div>
<div style="left:733px;top:401px;width:1px;height:89px;background:#a0a0a0;"></div>
<div style="left:613px;top:489px;width:121px;height:1px;background:#a0a0a0;"></div>
<div style="left:614px;top:402px;width:118px;height:13px;background:#000080;"></div>
<div style="left:617px;top:418px;width:112px;height:68px;background:#fff;box-sizing:border-box;border-top:1px solid #8c8c8c;border-left:1px solid #8c8c8c;border-right:1px solid #d4d4d4;border-bottom:1px solid #e4e4e4;"></div>
<span class="t" style="left:627.5px;top:421px;font-weight:bold;letter-spacing:-0.875px;max-width:100.5px;overflow:hidden;">(E:)</span>
<span class="t" style="left:621px;top:436px;letter-spacing:-0.753px;max-width:107px;overflow:hidden;">390.63 GB NTFS</span>
<span class="t" style="left:621px;top:451px;letter-spacing:-0.178px;max-width:107px;overflow:hidden;">Healthy (Primary Pa</span>
<div style="left:197px;top:496px;width:575px;height:1px;background:#fff;"></div>
<div style="left:197px;top:495px;width:102px;height:1px;background:#e3e3e3;"></div>
<div style="left:297px;top:496px;width:1px;height:97px;background:#fff;"></div>
<div style="left:299px;top:496px;width:1px;height:97px;background:#8c8c8c;"></div>
<div style="left:197px;top:592px;width:576px;height:1px;background:#989898;"></div>
<div style="left:197px;top:593px;width:102px;height:1px;background:#a0a0a0;"></div>
<div style="left:772px;top:496px;width:1px;height:97px;background:#a0a0a0;"></div>
<span class="t" style="left:223px;top:503px;font-weight:bold;letter-spacing:-0.227px;">Disk 1</span>
<span class="t" style="left:205px;top:518px;letter-spacing:-0.669px;">Basic</span>
<span class="t" style="left:205px;top:533px;letter-spacing:-0.756px;">3072.00 GB</span>
<span class="t" style="left:205px;top:548px;letter-spacing:0.052px;">Online</span>
<svg style="left:206px;top:504px" width="16" height="10" viewBox="0 0 16 10"><path d="M2 1.9L3.8 0.3H12.4L14.2 1.9Z" fill="#ececec" stroke="#c8c8cc" stroke-width=".6"/><rect x="0.5" y="1.4" width="15.2" height="7.1" rx="2.2" fill="#dfe2ee" stroke="#6e6e78" stroke-width=".9"/><rect x="1.6" y="2.1" width="9" height="1.5" rx=".7" fill="#fff"/><rect x="1.8" y="6.6" width="11.6" height="1.1" rx=".5" fill="#f4f4f8"/><rect x="10.8" y="3.1" width="3.4" height="4.1" rx=".8" fill="#514a60"/><rect x="11.5" y="3.3" width="1.8" height="3.7" fill="#36e41c"/></svg>
<div style="left:300px;top:514px;width:241px;height:75px;background:#c0c0c0;"></div>
<div style="left:300px;top:500px;width:1px;height:89px;background:#fff;"></div>
<div style="left:300px;top:514px;width:1px;height:75px;background:#909090;"></div>
<div style="left:540px;top:500px;width:1px;height:89px;background:#a0a0a0;"></div>
<div style="left:300px;top:588px;width:241px;height:1px;background:#a0a0a0;"></div>
<div style="left:301px;top:501px;width:238px;height:13px;background:#000080;"></div>
<div style="left:304px;top:517px;width:232px;height:68px;background:#fff;box-sizing:border-box;border-top:1px solid #8c8c8c;border-left:1px solid #8c8c8c;background-image:repeating-linear-gradient(135deg,transparent 0,transparent 5.0px,#8c8c8c 5.0px,#8c8c8c 5.657px);background-position:-4px 0;"></div>
<span class="t" style="left:308px;top:520px;font-weight:bold;letter-spacing:-0.047px;background:#fff;line-height:15px;height:15px;margin-top:1px;max-width:227px;overflow:hidden;">New Volume</span>
<span class="t" style="left:308px;top:535px;letter-spacing:-0.715px;background:#fff;line-height:15px;height:15px;margin-top:1px;max-width:227px;overflow:hidden;">2048.00 GB NTFS</span>
<span class="t" style="left:308px;top:550px;letter-spacing:-0.026px;background:#fff;line-height:15px;height:15px;margin-top:1px;max-width:227px;overflow:hidden;">Healthy (Primary Partition)</span>
<div style="left:541px;top:514px;width:230px;height:75px;background:#f0f0f0;"></div>
<div style="left:541px;top:500px;width:1px;height:89px;background:#fff;"></div>
<div style="left:770px;top:500px;width:1px;height:89px;background:#a0a0a0;"></div>
<div style="left:541px;top:588px;width:230px;height:1px;background:#a0a0a0;"></div>
<div style="left:542px;top:501px;width:227px;height:13px;background:#000;"></div>
<div style="left:545px;top:517px;width:221px;height:68px;background:#fff;box-sizing:border-box;border-top:1px solid #8c8c8c;border-left:1px solid #8c8c8c;border-right:1px solid #d4d4d4;border-bottom:1px solid #e4e4e4;"></div>
<span class="t" style="left:549.5px;top:535px;letter-spacing:-0.856px;max-width:215.5px;overflow:hidden;">1024.00 GB</span>
<span class="t" style="left:549.5px;top:550px;letter-spacing:-0.125px;max-width:215.5px;overflow:hidden;">Unallocated</span>
<div style="left:197px;top:593px;width:577px;height:1px;background:#a0a0a0;"></div>
<div style="left:197px;top:594px;width:577px;height:1px;background:#fff;"></div>
<div style="left:297px;top:594px;width:1px;height:68px;background:#fff;"></div>
<div style="left:299px;top:593px;width:1px;height:69px;background:#a0a0a0;"></div>
<span class="t" style="left:223.5px;top:602px;font-weight:bold;letter-spacing:-0.230px;">CD-ROM 0</span>
<span class="t" style="left:205px;top:617px;letter-spacing:-0.418px;">DVD (Y:)</span>
<span class="t" style="left:205.5px;top:647px;letter-spacing:0.018px;">No Media</span>
<svg style="left:206px;top:599px" width="16" height="16" viewBox="0 0 16 16"><circle cx="10.6" cy="5" r="4.7" fill="#dde6dd" stroke="#8a928a" stroke-width=".7"/><path d="M10.6 5L7.2 1.9A4.7 4.7 0 0 1 11.8 0.5Z" fill="#58c048"/><path d="M10.6 5L14.6 7.2A4.7 4.7 0 0 1 11 9.6Z" fill="#f0f0c8"/><circle cx="10.6" cy="5" r="1.3" fill="#fff" stroke="#808080" stroke-width=".5"/><path d="M1.4 9.2L3 7.6H7.2" stroke="#9a9a9a" stroke-width=".7" fill="none"/><rect x="0.5" y="9.3" width="15.2" height="6" rx="1.5" fill="#dcdfe6" stroke="#6c6c74" stroke-width=".9"/><rect x="1.5" y="10" width="13.2" height="1.5" rx=".6" fill="#fafafa"/><rect x="2.6" y="12.8" width="7.6" height=".9" fill="#8c8c94"/><rect x="11.4" y="11.4" width="2.4" height="2.4" fill="#34c420"/></svg>
<div style="left:196px;top:662px;width:594px;height:1px;background:#fff;"></div>
<div style="left:196px;top:663px;width:594px;height:18px;background:#f0f0f0;"></div>
<div style="left:196px;top:681px;width:594px;height:1px;background:#707070;"></div>
<div style="left:789px;top:663px;width:1px;height:19px;background:#8c8c8c;"></div>
<div style="left:201px;top:665px;width:12px;height:14px;background:#fff;"></div>
<div style="left:202px;top:666px;width:10px;height:12px;background:#000;"></div>
<span class="t" style="left:217.5px;top:665px;letter-spacing:-0.080px;">Unallocated</span>
<div style="left:285px;top:665px;width:12px;height:14px;background:#fff;"></div>
<div style="left:286px;top:666px;width:10px;height:12px;background:#000080;"></div>
<span class="t" style="left:301px;top:665px;letter-spacing:0.097px;">Primary partition</span>
<div style="left:795px;top:83px;width:190px;height:601px;background:#fff;"></div>
<div style="left:795px;top:83px;width:190px;height:1px;background:#a0a0a0;"></div>
<div style="left:795px;top:83px;width:1px;height:600px;background:#a0a0a0;"></div>
<div style="left:796px;top:84px;width:188px;height:1px;background:#696969;"></div>
<div style="left:796px;top:84px;width:1px;height:599px;background:#696969;"></div>
<div style="left:797px;top:682px;width:187px;height:1px;background:#e3e3e3;"></div>
<div style="left:983px;top:85px;width:1px;height:598px;background:#e3e3e3;"></div>
<div style="left:796px;top:683px;width:189px;height:1px;background:#fff;"></div>
<div style="left:984px;top:84px;width:1px;height:600px;background:#fff;"></div>
<div style="left:797px;top:85px;width:186px;height:20px;background:#f0f0f0;"></div>
<div style="left:797px;top:105px;width:186px;height:1px;background:#a0a0a0;"></div>
<span class="t" style="left:802px;top:88px;font-weight:bold;letter-spacing:-0.431px;">Actions</span>
<div style="left:797px;top:107px;width:186px;height:25px;background:linear-gradient(#b8d1ea,#9dbada);"></div>
<span class="t" style="left:804px;top:112px;letter-spacing:-0.048px;">Disk Management</span>
<span class="t" style="left:828px;top:136px;letter-spacing:0.052px;">More Actions</span>
<svg style="left:960px;top:110px" width="20" height="44"><path d="M6.5 12H16.5L11.5 7Z" fill="#000"/><path d="M10 28.5V38.5L15 33.5Z" fill="#000"/></svg>
<div style="left:764px;top:686px;width:1px;height:20px;background:#d7d7d7;"></div>
<div style="left:898px;top:686px;width:1px;height:20px;background:#d7d7d7;"></div>
<div style="left:982px;top:686px;width:1px;height:20px;background:#d7d7d7;"></div>
<svg style="left:9px;top:7px" width="16" height="16" viewBox="0 0 16 16"><defs><linearGradient id="g4" x1="0" y1="0" x2="1" y2="0.3"><stop offset="0" stop-color="#0818c8"/><stop offset=".45" stop-color="#1030e0"/><stop offset=".6" stop-color="#a8c0ff"/><stop offset="1" stop-color="#3860f0"/></linearGradient></defs><rect x="0.8" y="4" width="2.6" height="6.5" fill="#b8b8b8" stroke="#909090" stroke-width=".5"/><rect x="1.5" y="7.2" width="1.4" height="1.1" fill="#30e030"/><rect x="1.9" y="5" width=".6" height="1.4" fill="#404040"/><rect x="3.5" y="0.3" width="12.2" height="9.9" rx=".6" fill="#dcdcd8" stroke="#a8a8a8" stroke-width=".7"/><rect x="5" y="1.7" width="9.4" height="7" fill="url(#g4)"/><path d="M3.5 10.8Q6.1 5.8 8.7 10.8" stroke="#101010" stroke-width="1.3" fill="#f4f4f4"/><rect x="0.3" y="10.3" width="11.8" height="5.4" rx=".5" fill="#5f6f7d"/><rect x="0.3" y="10.3" width="11.8" height="1.6" fill="#93a1ae"/><rect x="0.3" y="12.6" width="11.8" height="1.3" fill="#8795a2"/><rect x="3.2" y="12.2" width="1.2" height="2.2" fill="#fff"/><rect x="4.4" y="12.2" width=".9" height="2.2" fill="#222"/><rect x="6.9" y="12.2" width="1.2" height="2.2" fill="#fff"/><rect x="8.1" y="12.2" width=".9" height="2.2" fill="#222"/></svg>
<svg style="left:6px;top:59px" width="16" height="15" viewBox="0 0 16 15"><defs><linearGradient id="g5" x1="0" y1="0" x2="1" y2="1"><stop offset="0" stop-color="#7fd0fa"/><stop offset=".55" stop-color="#3aa4ec"/><stop offset="1" stop-color="#1560c8"/></linearGradient></defs><path d="M0.6 7.5L7.6 0.6V4H15.6V11H7.6V14.4Z" fill="url(#g5)" stroke="#2a9be6" stroke-width="1" stroke-linejoin="round"/></svg>
<svg style="left:29px;top:59px" width="16" height="15" viewBox="0 0 16 15"><defs><linearGradient id="g6" x1="0" y1="0" x2="0" y2="1"><stop offset="0" stop-color="#b4b4b4"/><stop offset="1" stop-color="#787878"/></linearGradient></defs><path d="M15.4 7.5L8.4 0.6V4H0.4V11H8.4V14.4Z" fill="url(#g6)" stroke="#5c5c5c" stroke-width="1" stroke-linejoin="round"/></svg>
<div style="left:51px;top:57px;width:1px;height:18px;background:#8c8c8c;"></div>
<svg style="left:61px;top:59px" width="15" height="15" viewBox="0 0 15 15"><path d="M0.5 3.4Q0.5 2.4 1.5 2.4H5.5L6.8 1.2H13Q13.8 1.2 13.8 2V13.8H0.5Z" fill="#f4dc98" stroke="#cfa54e" stroke-width=".9"/><rect x="1.2" y="5" width="12" height="8.2" fill="#f0d080"/><rect x="9.4" y="1.9" width="3.2" height="1" fill="#6aa0e0"/><path d="M2.6 10.2C4.4 9.4 5.2 7.4 5 5.2L3.2 5.4L6 0.6L9.8 3.6L7.8 4.2C8.2 7.6 6.2 10.2 3.2 11.2Z" fill="#4cc030" stroke="#2a9018" stroke-width=".5"/></svg>
<div style="left:80px;top:55px;width:23px;height:21px;background:#cce8ff;box-sizing:border-box;border:1px solid #99d1ff;"></div>
<svg style="left:84px;top:61px" width="16" height="13" viewBox="0 0 16 13"><rect x="0.5" y="0.5" width="15" height="12" fill="#f4f4f4" stroke="#7c7c7c" stroke-width="1"/><rect x="1" y="1" width="14" height="2.2" fill="#dcdcdc"/><rect x="1" y="3.2" width="14" height=".9" fill="#8c8c8c"/><rect x="11" y="1.4" width="1.2" height="1.2" fill="#fff"/><rect x="13" y="1.4" width="1.2" height="1.2" fill="#fff"/><rect x="5.2" y="4.1" width=".9" height="8" fill="#8c8c8c"/><rect x="6.1" y="4.8" width="8.4" height="6.8" fill="#fff"/><rect x="2" y="5.4" width="2" height="1.2" fill="#3c78d8"/><rect x="2" y="7.6" width="2" height="1.2" fill="#3c78d8"/><rect x="2" y="9.8" width="2" height="1.2" fill="#3c78d8"/><path d="M11 5.4V11L7.6 8.2Z" fill="#3cb828"/></svg>
<div style="left:105px;top:57px;width:1px;height:18px;background:#8c8c8c;"></div>
<svg style="left:115px;top:58px" width="13" height="16" viewBox="0 0 13 16"><rect x="0" y="0" width="13" height="16" fill="#3048b8"/><rect x="0" y="0" width="13" height="16" fill="none" stroke="#203090" stroke-width="1"/><path d="M3 0.5H9.5L12.5 9V15.5H9Z" fill="#6480e0" opacity=".9"/><text x="6.6" y="13" font-family="Liberation Sans, sans-serif" font-size="15" fill="#fff" text-anchor="middle">?</text></svg>
<div style="left:134px;top:55px;width:23px;height:21px;background:#cce8ff;box-sizing:border-box;border:1px solid #99d1ff;"></div>
<svg style="left:138px;top:61px" width="16" height="13" viewBox="0 0 16 13"><rect x="0.5" y="0.5" width="15" height="12" fill="#f4f4f4" stroke="#7c7c7c" stroke-width="1"/><rect x="1" y="1" width="14" height="2.2" fill="#dcdcdc"/><rect x="1" y="3.2" width="14" height=".9" fill="#8c8c8c"/><rect x="11" y="1.4" width="1.2" height="1.2" fill="#fff"/><rect x="13" y="1.4" width="1.2" height="1.2" fill="#fff"/><rect x="9.9" y="4.1" width=".9" height="8" fill="#8c8c8c"/><rect x="1.5" y="4.8" width="8.4" height="6.8" fill="#fff"/><rect x="12" y="5.4" width="2" height="1.2" fill="#3c78d8"/><rect x="12" y="7.6" width="2" height="1.2" fill="#3c78d8"/><rect x="12" y="9.8" width="2" height="1.2" fill="#3c78d8"/><path d="M4.6 5.4V11L8 8.2Z" fill="#3cb828"/></svg>
<div style="left:159px;top:57px;width:1px;height:18px;background:#8c8c8c;"></div>
<svg style="left:169px;top:58px" width="14" height="16" viewBox="0 0 14 16"><path d="M0.7 0.7H9.6L12.6 3.8V15.2H0.7Z" fill="#fff" stroke="#101010" stroke-width="1.3"/><path d="M9.4 0.8V4H12.5" fill="none" stroke="#101010" stroke-width="1"/><path d="M3.6 8.4V5.8Q3.6 4.5 4.9 4.5H7.4" stroke="#169018" stroke-width="1.5" fill="none" stroke-dasharray="2.2 .7"/><path d="M6.8 2L10.2 4.5L6.8 7Z" fill="#169018"/><path d="M10 7.6V10.4Q10 11.7 8.7 11.7H6.2" stroke="#169018" stroke-width="1.5" fill="none" stroke-dasharray="2.2 .7"/><path d="M6.8 9.2L3.4 11.7L6.8 14.2Z" fill="#169018"/></svg>
<svg style="left:191px;top:59px" width="14" height="14" viewBox="0 0 14 14"><path d="M0.6 1.2L2 0.8L13.4 12.4L12.6 13.4Z" fill="#101010"/><path d="M13.2 0.4L13.6 1.4L2 13.2L0.6 13.8L1 12Z" fill="#101010"/><path d="M1.2 1.2L12.8 12.8M13 1L1.4 13" stroke="#101010" stroke-width="1.2" fill="none"/></svg>
<svg style="left:214px;top:59px" width="15" height="15" viewBox="0 0 15 15"><rect x="0.6" y="3.6" width="11.2" height="10.6" fill="#161616" stroke="#101010" stroke-width="1"/><rect x="1.6" y="8" width="9.2" height="1.1" fill="#fff"/><rect x="1.6" y="10.3" width="9.2" height="1.1" fill="#fff"/><rect x="1.6" y="12.5" width="9.2" height="1" fill="#fff"/><rect x="1.8" y="4.8" width="1.6" height="1.4" fill="#fff"/><path d="M3.6 6.2L7.6 1.2L12.6 0.6L13.2 4L9.8 6.4L8.2 7.6Z" fill="#d4d4d4" stroke="#202020" stroke-width=".7"/><path d="M5.6 5L8.4 2M7 6L10.2 2.6M8.6 6.6L11.4 3.6M5.2 3.8L8.6 6.8M6.8 2.2L10.2 5.4" stroke="#585858" stroke-width=".6"/><rect x="13.7" y="0.2" width="1.2" height="6" fill="#1010c8"/></svg>
<svg style="left:237px;top:58px" width="16" height="15" viewBox="0 0 16 15"><path d="M0.8 5.6H4.6L5.8 4.4H10.6V7.2" fill="#f8f088" stroke="#585800" stroke-width=".9"/><path d="M0.8 5.8V13.6H11.2L15 8.2H4.6L0.8 13.4Z" fill="#8c8c10" stroke="#484800" stroke-width=".9" stroke-linejoin="round"/><path d="M0.9 6V13L4.3 7.4H10.4V7.2H1.4Z" fill="#f4ec70"/><path d="M8.6 2.6Q11.6 0.2 13.8 3.2" stroke="#101010" stroke-width="1" fill="none"/><path d="M14.8 1.6V4.8H11.6Z" fill="#101010"/></svg>
<svg style="left:260px;top:58px" width="16" height="16" viewBox="0 0 16 16"><path d="M0.5 3.4V2.6H1.6L2.4 1H7.2L8 2.6H13.8V13.7H0.5Z" fill="#ece47c" stroke="#8a8a8a" stroke-width=".9"/><rect x="1.6" y="3.6" width="11" height="9" fill="#e4e0a0" opacity=".7"/><circle cx="6.6" cy="7.4" r="3.2" fill="#58e4ec" stroke="#505050" stroke-width="1.1"/><circle cx="6.4" cy="7.2" r="1.7" fill="#b0f6fa"/><path d="M9.2 10L14.2 15" stroke="#101010" stroke-width="2.4" stroke-linecap="round"/><path d="M9 9.8L14 14.8" stroke="#1818e8" stroke-width="1.6" stroke-linecap="round"/></svg>
<svg style="left:283px;top:58.5px" width="17" height="16" viewBox="0 0 17 16"><rect x="0.6" y="0.6" width="13.6" height="13.4" fill="#e4e4e4" stroke="#585858" stroke-width="1.1"/><path d="M1.2 13.4H13.6V1.2" stroke="#101010" stroke-width=".9" fill="none"/><rect x="2.4" y="2.6" width="3" height="3" fill="#fff" stroke="#181818" stroke-width=".8"/><rect x="7.4" y="3.2" width="4.6" height="1.3" fill="#303030"/><rect x="2.4" y="7.6" width="3" height="3" fill="#fff" stroke="#181818" stroke-width=".8"/><g transform="translate(10.5 9.4)"><g fill="#f4e400" stroke="#605800" stroke-width=".35"><path d="M-1.1 -2.4L0 -5.3L1.1 -2.4Z" transform="rotate(0)"/><path d="M-1.1 -2.4L0 -5.3L1.1 -2.4Z" transform="rotate(45)"/><path d="M-1.1 -2.4L0 -5.3L1.1 -2.4Z" transform="rotate(90)"/><path d="M-1.1 -2.4L0 -5.3L1.1 -2.4Z" transform="rotate(135)"/><path d="M-1.1 -2.4L0 -5.3L1.1 -2.4Z" transform="rotate(180)"/><path d="M-1.1 -2.4L0 -5.3L1.1 -2.4Z" transform="rotate(225)"/><path d="M-1.1 -2.4L0 -5.3L1.1 -2.4Z" transform="rotate(270)"/><path d="M-1.1 -2.4L0 -5.3L1.1 -2.4Z" transform="rotate(315)"/></g><circle r="2.9" fill="#f6e618" stroke="#807400" stroke-width=".4"/><rect x="-1.2" y="-1.7" width="2.4" height="3" fill="#e0e0e0" stroke="#303030" stroke-width=".6"/></g></svg>
<div style="left:594px;top:269px;width:4px;height:271px;background:linear-gradient(to right,rgba(0,0,0,.48),rgba(0,0,0,.22) 40%,rgba(0,0,0,0));"></div>
<div style="left:341px;top:538px;width:255px;height:4px;background:linear-gradient(to bottom,rgba(0,0,0,.40),rgba(0,0,0,.16) 45%,rgba(0,0,0,0));"></div>
<div style="left:594px;top:538px;width:4px;height:4px;background:radial-gradient(circle at 0 0,rgba(0,0,0,.42),rgba(0,0,0,0) 4px);"></div>
<div style="left:336px;top:263px;width:258px;height:275px;background:#f2f2f2;box-sizing:border-box;border:1px solid #b4b4b4;border-top-color:#a8a8a8;"></div>
<span class="t" style="left:371.5px;top:269px;color:#000;letter-spacing:-0.340px;">Open</span>
<span class="t" style="left:371.5px;top:291px;color:#000;letter-spacing:-0.455px;">Explore</span>
<div style="left:367px;top:313px;width:224px;height:1px;background:#d7d7d7;"></div>
<span class="t" style="left:371.5px;top:320px;color:#6d6d6d;letter-spacing:-0.029px;">Mark Partition as Active</span>
<span class="t" style="left:371.5px;top:342px;color:#000;letter-spacing:-0.234px;">Change Drive Letter and Paths...</span>
<span class="t" style="left:371.5px;top:364px;color:#000;letter-spacing:-0.224px;">Format...</span>
<div style="left:367px;top:386px;width:224px;height:1px;background:#d7d7d7;"></div>
<span class="t" style="left:371.5px;top:393px;color:#6d6d6d;letter-spacing:-0.296px;">Extend Volume...</span>
<span class="t" style="left:371.5px;top:415px;color:#000;letter-spacing:-0.211px;">Shrink Volume...</span>
<span class="t" style="left:371.5px;top:437px;color:#6d6d6d;letter-spacing:0.049px;">Add Mirror...</span>
<div style="left:339px;top:456px;width:252px;height:22px;background:#91c9f7;"></div>
<span class="t" style="left:371.5px;top:459px;color:#000;letter-spacing:-0.254px;">Delete Volume...</span>
<div style="left:367px;top:481px;width:224px;height:1px;background:#d7d7d7;"></div>
<span class="t" style="left:371.5px;top:488px;color:#000;letter-spacing:-0.240px;">Properties</span>
<div style="left:367px;top:510px;width:224px;height:1px;background:#d7d7d7;"></div>
<span class="t" style="left:371.5px;top:517px;color:#000;letter-spacing:-0.047px;">Help</span>
<svg style="left:360px;top:450px" width="114" height="32"><rect x="4" y="4.5" width="102.8" height="23" rx="2.6" fill="none" stroke="#f50a12" stroke-width="2.8" stroke-linecap="round" stroke-dasharray="6.3 5.75" stroke-dashoffset="-2.5"/></svg>
<svg style="left:467px;top:466px" width="14" height="22" viewBox="0 0 14 22"><path d="M1.5 1.5V17.5L5.3 13.9L8.1 20.3L10.6 19.2L7.8 13H12.8Z" fill="#fff" stroke="#000" stroke-width="1" stroke-linejoin="miter"/></svg>
</div>
</body></html>
